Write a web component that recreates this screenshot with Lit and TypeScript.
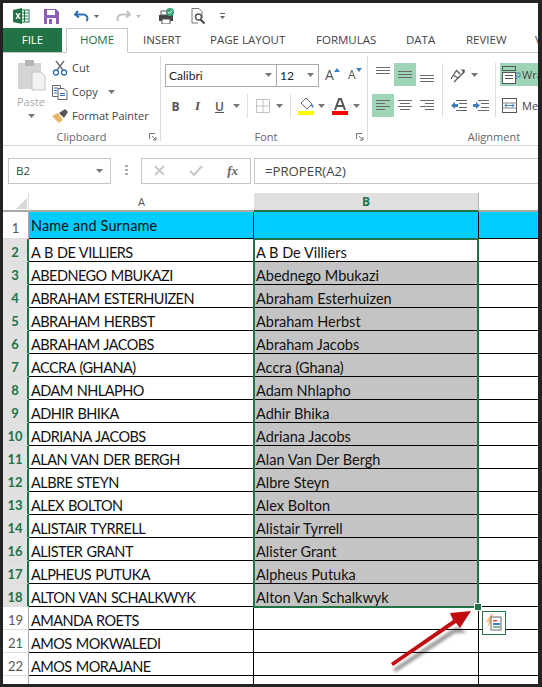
import { LitElement, html, css, svg } from "lit";
import { customElement } from "lit/decorators.js";

const ROWS: [string, string, string][] = [
  ["2", "A B DE VILLIERS", "A B De Villiers"],
  ["3", "ABEDNEGO MBUKAZI", "Abednego Mbukazi"],
  ["4", "ABRAHAM ESTERHUIZEN", "Abraham Esterhuizen"],
  ["5", "ABRAHAM HERBST", "Abraham Herbst"],
  ["6", "ABRAHAM JACOBS", "Abraham Jacobs"],
  ["7", "ACCRA (GHANA)", "Accra (Ghana)"],
  ["8", "ADAM NHLAPHO", "Adam Nhlapho"],
  ["9", "ADHIR BHIKA", "Adhir Bhika"],
  ["10", "ADRIANA JACOBS", "Adriana Jacobs"],
  ["11", "ALAN VAN DER BERGH", "Alan Van Der Bergh"],
  ["12", "ALBRE STEYN", "Albre Steyn"],
  ["13", "ALEX BOLTON", "Alex Bolton"],
  ["14", "ALISTAIR TYRRELL", "Alistair Tyrrell"],
  ["16", "ALISTER GRANT", "Alister Grant"],
  ["17", "ALPHEUS PUTUKA", "Alpheus Putuka"],
  ["18", "ALTON VAN SCHALKWYK", "Alton Van Schalkwyk"],
  ["19", "AMANDA ROETS", ""],
  ["21", "AMOS MOKWALEDI", ""],
  ["22", "AMOS MORAJANE", ""],
  ["", "", ""],
];

const caret = html`<svg class="caret" width="7" height="4" viewBox="0 0 7 4"><path d="M0 0h7L3.5 4z" fill="#777"/></svg>`;
const lines = (spec: [number, number][], y0: number) => svg`${spec.map(([x, w], i) => svg`<rect x="${x}" y="${y0 + i * 3}" width="${w}" height="1" fill="#6a6a6a"/>`)}`;
const alignIcon = (spec: [number, number][], y0: number) => html`<svg width="16" height="16" viewBox="0 0 16 16">${lines(spec, y0)}</svg>`;
const indentIcon = (flip: boolean) => html`<svg width="18" height="14" viewBox="0 0 18 14">
  <rect x="6" y="1" width="11" height="1" fill="#666"/><rect x="9" y="4" width="8" height="1" fill="#666"/><rect x="9" y="8" width="8" height="1" fill="#666"/><rect x="6" y="11" width="11" height="1" fill="#666"/>
  <path d="${flip ? "M1 5h3V3l4 3.500-4 3.500V8H1z" : "M8 5H5V3L1 6.500 5 10V8h3z"}" fill="#3f7fbf"/></svg>`;

@customElement("app-root")
export class AppRoot extends LitElement {
  static styles = css`
    :host { display: block; width: 542px; height: 687px; box-sizing: border-box; background: #232323; padding: 3px 4px 3px 3px; overflow: hidden; font-family: "Open Sans", "Noto Sans", sans-serif; color: #444; }
    .app { position: relative; background: #fff; height: 681px; overflow: hidden; }
    .qat { height: 25px; display: flex; align-items: center; padding-top: 1px; box-sizing: border-box; }
    .qat svg { display: block; flex: none; }
    .tabs { height: 25px; display: flex; align-items: stretch; border-bottom: 1px solid #c6c6c6; box-sizing: border-box; font-size: 11.5px; color: #444; }
    .tab { display: flex; align-items: center; white-space: nowrap; flex: none; padding-bottom: 2px; box-sizing: border-box; }
    .file { width: 59px; justify-content: center; background: #217346; color: #fff; margin-right: 4px; height: 24px; }
    .home { width: 62px; justify-content: center; color: #217346; border: 1px solid #c6c6c6; border-bottom: 1px solid #fff; height: 25px; margin-right: 15px; }
    .t-insert { width: 67px; } .t-layout { width: 106px; } .t-formulas { width: 90px; } .t-data { width: 60px; } .t-review { width: 69px; }
    .ribbon { height: 93px; display: flex; border-bottom: 1px solid #d6d6d6; box-sizing: border-box; overflow: hidden; }
    .group { flex: none; position: relative; display: flex; flex-direction: column; margin-top: 3px; height: 85px; box-sizing: border-box; border-right: 1px solid #dcdcdc; }
    .group-body { height: 73px; flex: none; display: flex; }
    .group-label { height: 16px; line-height: 16px; text-align: center; font-size: 11px; color: #666; }
    .launcher { position: absolute; right: 3px; bottom: 0; display: block; }
    .clip { width: 158px; }
    .paste { width: 42px; margin-left: 7px; display: flex; flex-direction: column; align-items: center; color: #a8a8a8; font-size: 11px; padding-top: 4px; }
    .paste span { margin-top: 4px; line-height: 14px; }
    .paste .caret { margin-top: 5px; }
    .clip-list { display: flex; flex-direction: column; padding-top: 2px; gap: 5px; }
    .clip-item { height: 19px; display: flex; align-items: center; gap: 4px; font-size: 11px; color: #444; white-space: nowrap; }
    .clip-item svg:first-child { width: 16px; flex: none; }
    .clip-item .caret { margin-left: 6px; }
    .font { width: 207px; padding: 7px 0 0 4px; }
    .font .group-body, .align .group-body { height: 66px; }
    .font-col { display: flex; flex-direction: column; }
    .row1 { display: flex; align-items: center; height: 24px; }
    .combo { height: 23px; box-sizing: border-box; border: 1px solid #ababab; display: flex; align-items: center; justify-content: space-between; padding: 0 4px 0 3px; font-size: 12px; color: #222; font-family: "Lato", sans-serif; }
    .c-font { width: 111px; border-right: 0; }
    .c-size { width: 43px; }
    .grow { display: flex; align-items: flex-start; margin-left: 6px; width: 17px; font-size: 14px; line-height: 22px; color: #555; }
    .grow.small { font-size: 12px; }
    .grow svg { margin-top: 4px; }
    .row2 { display: flex; align-items: center; height: 24px; margin-top: 7px; font-size: 12px; color: #555; }
    .fbtn { display: flex; align-items: center; justify-content: center; flex: none; }
    .fb { width: 15px; margin-left: 3px; font-weight: 700; }
    .fi { width: 17px; margin-left: 6px; font-style: italic; font-family: "Liberation Serif", serif; font-weight: 700; font-size: 13px; }
    .fu { width: 11px; margin-left: 8px; text-decoration: underline; font-weight: 600; }
    .w7 { width: 7px; } .ml3 { margin-left: 3px; } .ml4 { margin-left: 4px; } .ml5 { margin-left: 5px; } .ml6 { margin-left: 6px; } .ml7 { margin-left: 7px; } .ml8 { margin-left: 8px; }
    .sep { width: 1px; height: 24px; background: #dedede; flex: none; }
    .align { width: 248px; padding: 7px 0 0 4px; border-right: 0; }
    .align-grid { display: grid; grid-template-columns: repeat(3, 22px); grid-auto-rows: 23px; row-gap: 8px; flex: none; }
    .ab { display: flex; align-items: center; justify-content: center; }
    .ab.on { background: #9fd5b7; }
    .align-sep { width: 1px; height: 54px; background: #dedede; flex: none; }
    .s1 { margin: 0 7px 0 4px; } .s2 { margin: 0 4px 0 5px; }
    .orient-col { display: flex; flex-direction: column; width: 40px; flex: none; }
    .orient-col > div { height: 23px; display: flex; align-items: center; }
    .orient-col > div + div { margin-top: 8px; gap: 4px; }
    .orient-caret { margin-left: 4px; display: flex; }
    .wrap-col { display: flex; flex-direction: column; font-size: 11px; flex: none; }
    .wrap-col > div { height: 23px; display: flex; align-items: center; gap: 1px; width: 70px; padding-left: 2px; box-sizing: border-box; color: #444; white-space: nowrap; }
    .wrap-col svg { flex: none; }
    .wrap-col > div.on { background: #9fd5b7; }
    .wrap-col > div + div { margin-top: 8px; }
    .fbar { height: 47px; display: flex; align-items: center; padding: 2px 0 0 5px; box-sizing: border-box; }
    .fbar > div { height: 26px; box-sizing: border-box; border: 1px solid #c6c6c6; display: flex; align-items: center; flex: none; }
    .namebox { width: 103px; justify-content: space-between; padding: 0 7px; font-size: 11.5px; color: #444; }
    .fbar > .dots { border: 0; width: 30px; justify-content: center; }
    .fx { width: 110px; margin-right: 3px; justify-content: space-between; padding: 0 12px; }
    .fx i { font-family: "Liberation Serif", serif; font-size: 13px; font-weight: bold; color: #666; }
    .fbar > .formula { width: 290px; border-right: 0; padding-left: 10px; font-size: 13.2px; color: #444; }
    .sheet { display: grid; grid-template-columns: 26px 225px 225px 59px; grid-template-rows: 19px 27px; grid-auto-rows: 23px; }
    .corner, .colh { box-sizing: border-box; border-bottom: 2px solid #a8a8a8; }
    .corner { display: flex; align-items: flex-end; justify-content: flex-end; padding: 0 1px 1px 0; border-right: 1px solid #e0e0e0; }
    .colh { display: flex; align-items: center; justify-content: center; font-size: 11px; color: #555; }
    .colh.sel { background: #e0e0e0; color: #217346; font-weight: 700; font-size: 12px; border-bottom-color: #217346; border-right: 1px solid #b5b5b5; }
    .rowh { box-sizing: border-box; display: flex; align-items: flex-end; justify-content: center; font-size: 13px; line-height: 18px; color: #555; border-bottom: 1px solid #dcdcdc; border-right: 1px solid #a8a8a8; font-family: "Lato", sans-serif; }
    .rowh.sel { background: #e1e1e1; color: #217346; font-weight: 700; border-right: 2px solid #217346; line-height: 17px; }
    .rowh.head { padding-bottom: 1px; }
    .cell { box-sizing: border-box; border-right: 1px solid #000; border-bottom: 1px solid #000; display: flex; align-items: flex-end; padding-left: 2px; font-family: "Lato", sans-serif; font-size: 14.5px; line-height: 17px; color: #111; white-space: pre; overflow: hidden; }
    .cell.caps { letter-spacing: -.55px; word-spacing: 1px; }
    .cell.last { border-right: 0; }
    .cell.head { background: #00ccff; align-items: center; letter-spacing: .12px; }
    .cell.grey { background: #c4c4c4; }
    .selbox { position: absolute; left: 250px; top: 235px; width: 226px; height: 370px; box-sizing: border-box; border: 2px solid #217346; pointer-events: none; }
    .handle { position: absolute; left: 471px; top: 600px; width: 6px; height: 6px; background: #217346; border: 1px solid #fff; }
    .pasteopt { position: absolute; left: 479px; top: 608px; width: 24px; height: 24px; box-sizing: border-box; border: 1px solid #217346; background: #fff; display: flex; align-items: center; justify-content: center; }
    .arrow { position: absolute; left: 380px; top: 600px; }
  `;

  private launcher() {
    return html`<svg class="launcher" width="8" height="8" viewBox="0 0 8 8"><path d="M.5 6V.5H6" fill="none" stroke="#777"/><path d="M3 3l4 4M7 4v3H4" fill="none" stroke="#777"/></svg>`;
  }

  private qat() {
    return html`<div class="qat">
      <svg style="margin-left:10px" width="17" height="16" viewBox="0 0 17 16"><rect x="7" y="2" width="9" height="12" fill="#fff" stroke="#217346"/><path d="M8 5h7M8 8h7M8 11h7M11.500 2v12" stroke="#217346" fill="none"/><path d="M0 2l9-2v16l-9-2z" fill="#217346"/><path d="M2.500 5l1.500 3-1.500 3h1.500l1-2 1 2h1.500L6 8l1.500-3H6L5 7 4 5z" fill="#fff"/></svg>
      <svg style="margin-left:14px" width="15" height="15" viewBox="0 0 15 15"><path d="M0 0h12l3 3v12H0z" fill="#8c5fb4"/><rect x="3" y="1" width="8" height="5" fill="#fff"/><rect x="3" y="9" width="9" height="6" fill="#fff"/><rect x="5" y="10" width="3" height="5" fill="#8c5fb4"/></svg>
      <svg style="margin-left:15px" width="15" height="13" viewBox="0 0 15 13"><path d="M4 1L1 4.500 5 7.500M1.500 4.500H9a4 4 0 0 1 3.500 6.500" fill="none" stroke="#2f6fb5" stroke-width="2"/></svg>
      <svg style="margin-left:5px" width="5" height="3" viewBox="0 0 5 3"><path d="M0 0h5L2.500 3z" fill="#666"/></svg>
      <svg style="margin-left:17px" width="15" height="13" viewBox="0 0 15 13"><path d="M11 1l3 3.500-4 3M13.500 4.500H6a4 4 0 0 0-3.500 6.500" fill="none" stroke="#c2c2c2" stroke-width="2"/></svg>
      <svg style="margin-left:5px" width="5" height="3" viewBox="0 0 5 3"><path d="M0 0h5L2.500 3z" fill="#bbb"/></svg>
      <svg style="margin-left:17px" width="18" height="16" viewBox="0 0 18 16"><path d="M1 7h14v6H1z" fill="#444"/><path d="M3 3h6v4H3zM4 11h8v5H4z" fill="#fff" stroke="#555"/><circle cx="12" cy="4" r="4" fill="#3ba57a"/><path d="M10 4l1.500 1.500L14 2.500" stroke="#fff" fill="none"/></svg>
      <svg style="margin-left:15px" width="15" height="17" viewBox="0 0 15 17"><path d="M1 .5h7l3 3V10M1 .5V15h6" fill="none" stroke="#777"/><circle cx="7.500" cy="9" r="3" fill="#fff" stroke="#555" stroke-width="1.500"/><path d="M9.500 11.500l4 4" stroke="#444" stroke-width="2"/></svg>
      <svg style="margin-left:14px" width="5" height="7" viewBox="0 0 5 7"><path d="M0 0h5v1H0zM0 3h5L2.500 6z" fill="#666"/></svg>
    </div>`;
  }

  private tabs() {
    return html`<div class="tabs">
      <div class="tab file">FILE</div><div class="tab home">HOME</div>
      <div class="tab t-insert">INSERT</div><div class="tab t-layout">PAGE LAYOUT</div>
      <div class="tab t-formulas">FORMULAS</div><div class="tab t-data">DATA</div>
      <div class="tab t-review">REVIEW</div><div class="tab">VIEW</div>
    </div>`;
  }

  private clipboard() {
    return html`<div class="group clip"><div class="group-body">
      <div class="paste">
        <svg width="29" height="31" viewBox="0 0 29 31"><rect x="1" y="3" width="23" height="26" fill="#d4d4d4"/><rect x="8" y="0" width="9" height="6" fill="#b4b4b4"/><path d="M15 12h9l4 4v14H15z" fill="#f2f2f2" stroke="#c4c4c4"/></svg>
        <span>Paste</span>${caret}
      </div>
      <div class="clip-list">
        <div class="clip-item"><svg width="16" height="16" viewBox="0 0 16 16"><path d="M4 1l7 9M12 1L5 10" stroke="#777" stroke-width="1.600"/><circle cx="4" cy="12.500" r="2.500" fill="none" stroke="#2f6fb5" stroke-width="1.300"/><circle cx="12" cy="12.500" r="2.500" fill="none" stroke="#2f6fb5" stroke-width="1.300"/></svg>Cut</div>
        <div class="clip-item"><svg width="16" height="16" viewBox="0 0 16 16"><path d="M.5 1.500h8v11h-8z" fill="#fff" stroke="#666"/><path d="M6 4.500h6l3 3v8H6z" fill="#fff" stroke="#666"/><path d="M2 4h4M2 6.500h3M2 9h3M8 9.500h5M8 11.500h5" stroke="#2f6fb5"/></svg>Copy${caret}</div>
        <div class="clip-item"><svg width="16" height="14" viewBox="0 0 16 14"><path d="M0 7l6-3 5 7-4 3z" fill="#e4b665"/><path d="M7 4l6-4 3 3-4 6z" fill="#555"/></svg>Format Painter</div>
      </div>
    </div><div class="group-label">Clipboard</div>${this.launcher()}</div>`;
  }

  private fontGroup() {
    return html`<div class="group font"><div class="group-body"><div class="font-col">
      <div class="row1">
        <div class="combo c-font">Calibri${caret}</div>
        <div class="combo c-size">12${caret}</div>
        <div class="grow">A<svg width="6" height="4" viewBox="0 0 6 4"><path d="M0 4h6L3 0z" fill="#3f7fbf"/></svg></div>
        <div class="grow small">A<svg width="6" height="4" viewBox="0 0 6 4"><path d="M0 0h6L3 4z" fill="#3f7fbf"/></svg></div>
      </div>
      <div class="row2">
        <div class="fbtn fb">B</div>
        <div class="fbtn fi">I</div>
        <div class="fbtn fu">U</div>
        <div class="fbtn w7 ml8">${caret}</div>
        <div class="sep ml7"></div>
        <div class="fbtn ml8"><svg width="14" height="14" viewBox="0 0 14 14"><path d="M.5.500h13v13H.5zM7 .5v13M.5 7h13" fill="none" stroke="#888" stroke-dasharray="1 1"/></svg></div>
        <div class="fbtn w7 ml6">${caret}</div>
        <div class="sep ml7"></div>
        <div class="fbtn ml7"><svg width="16" height="18" viewBox="0 0 16 18"><path d="M8 1l6 6-5 5-6-6z" fill="#fff" stroke="#666"/><path d="M13 6c2 2 3 3 2 5-2-1-2-3-2-5z" fill="#3f7fbf"/><rect y="14" width="16" height="4" fill="#ffff00"/></svg></div>
        <div class="fbtn w7 ml4">${caret}</div>
        <div class="fbtn ml7"><svg width="16" height="18" viewBox="0 0 16 18"><path d="M3 13L7 2h2l4 11M5 9h6" fill="none" stroke="#555" stroke-width="2"/><rect y="14" width="16" height="4" fill="#ff0000"/></svg></div>
        <div class="fbtn w7 ml5">${caret}</div>
      </div>
    </div></div><div class="group-label">Font</div>${this.launcher()}</div>`;
  }

  private alignment() {
    return html`<div class="group align"><div class="group-body">
      <div class="align-grid">
        <div class="ab">${alignIcon([[1, 14], [1, 14], [1, 14]], 0)}</div>
        <div class="ab on">${alignIcon([[1, 14], [1, 14], [1, 14]], 4)}</div>
        <div class="ab">${alignIcon([[1, 14], [1, 14], [1, 14]], 8)}</div>
        <div class="ab on">${alignIcon([[1, 14], [1, 9], [1, 14], [1, 9]], 2)}</div>
        <div class="ab">${alignIcon([[1, 14], [3, 10], [1, 14], [3, 10]], 2)}</div>
        <div class="ab">${alignIcon([[1, 14], [6, 9], [1, 14], [6, 9]], 2)}</div>
      </div>
      <div class="align-sep s1"></div>
      <div class="orient-col">
        <div><svg width="17" height="16" viewBox="0 0 17 16"><path d="M1 12l5-8M3 8l5 3M6 3l4 4M4 15l10-10" fill="none" stroke="#555" stroke-width="1.200"/><path d="M11 2l4 1-1 4z" fill="#555"/></svg><span class="orient-caret">${caret}</span></div>
        <div>${indentIcon(false)}${indentIcon(true)}</div>
      </div>
      <div class="align-sep s2"></div>
      <div class="wrap-col">
        <div class="on"><svg width="19" height="18" viewBox="0 0 19 18"><rect x=".5" y=".5" width="13" height="4" fill="none" stroke="#555"/><rect x=".5" y="6.500" width="13" height="11" fill="#fff" stroke="#555"/><path d="M3 9.500h8M3 12.500h8" stroke="#555"/><path d="M14 7h4v4h-5M15 9l-2 2 2 2" fill="none" stroke="#3f7fbf"/></svg>Wrap Text</div>
        <div><svg width="19" height="16" viewBox="0 0 19 16"><rect x=".5" y=".5" width="14" height="14" fill="#fff" stroke="#555"/><path d="M.5 5h14M.5 10h14" stroke="#888"/><path d="M3 7.500h9M3 7.500l2-2M3 7.500l2 2M12 7.500l-2-2M12 7.500l-2 2" stroke="#3f7fbf" fill="none"/></svg>Merge</div>
      </div>
    </div><div class="group-label">Alignment</div></div>`;
  }

  private formulaBar() {
    return html`<div class="fbar">
      <div class="namebox">B2${caret}</div>
      <div class="dots"><svg width="3" height="11" viewBox="0 0 3 11"><path d="M0 0h3v2H0zM0 4h3v2H0zM0 8h3v2H0z" fill="#aaa"/></svg></div>
      <div class="fx">
        <svg width="11" height="11" viewBox="0 0 11 11"><path d="M1 1l9 9M10 1l-9 9" stroke="#c8c8c8" stroke-width="1.800"/></svg>
        <svg width="14" height="11" viewBox="0 0 14 11"><path d="M1 6l4 4 8-9" fill="none" stroke="#c8c8c8" stroke-width="2"/></svg>
        <i>fx</i>
      </div>
      <div class="formula">=PROPER(A2)</div>
    </div>`;
  }

  private sheet() {
    return html`<div class="sheet">
      <div class="corner"><svg width="11" height="11" viewBox="0 0 11 11"><path d="M11 0v11H0z" fill="#d8d8d8"/></svg></div>
      <div class="colh">A</div><div class="colh sel">B</div><div class="colh"></div>
      <div class="rowh head">1</div><div class="cell head">Name and Surname</div><div class="cell head"></div><div class="cell head last"></div>
      ${ROWS.map(([n, a, b]) => {
        const num = Number(n);
        const sel = num >= 2 && num <= 18;
        return html`<div class="rowh ${sel ? "sel" : ""}">${n}</div>
          <div class="cell caps">${a}</div>
          <div class="cell ${num >= 3 && num <= 18 ? "grey" : ""}">${b}</div>
          <div class="cell last"></div>`;
      })}
    </div>`;
  }

  render() {
    return html`<div class="app">
      ${this.qat()}${this.tabs()}
      <div class="ribbon">${this.clipboard()}${this.fontGroup()}${this.alignment()}</div>
      ${this.formulaBar()}${this.sheet()}
      <div class="selbox"></div><div class="handle"></div>
      <div class="pasteopt"><svg width="18" height="18" viewBox="0 0 18 18"><path d="M6 0L1 8h3l-2 6 6-8H5l3-6z" fill="#f0c080"/><rect x="6" y="3" width="10" height="13" fill="#fff" stroke="#666"/><rect x="8" y="6" width="4" height="1.500" fill="#d85050"/><rect x="8" y="9" width="7" height="2" fill="#3f7fbf"/><rect x="8" y="12" width="7" height="2" fill="#7dbb9c"/></svg></div>
      <svg class="arrow" width="100" height="72" viewBox="0 0 100 72">
        <defs><filter id="blur" x="-20%" y="-20%" width="140%" height="140%"><feGaussianBlur stdDeviation="1.800"/></filter></defs>
        <path d="M10 66L70 26 75 24 84 30 72 30 13 69z" fill="#000" opacity=".4" filter="url(#blur)"/>
        <path d="M8 60L70 17 67 10 88 8 77 25 73 20 10 63z" fill="#c00d12"/>
      </svg>
    </div>`;
  }
}
